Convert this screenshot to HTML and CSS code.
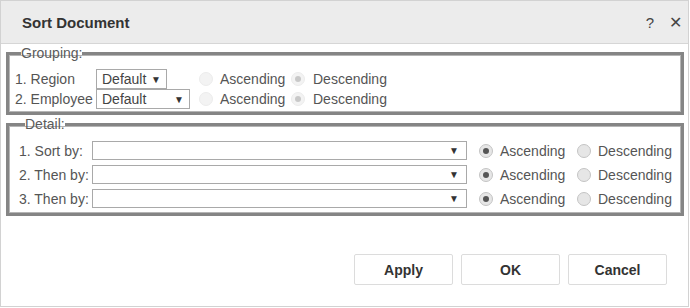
FILE: index.html
```html
<!DOCTYPE html>
<html>
<head>
<meta charset="utf-8">
<link rel="stylesheet" href="styles.css">
</head>
<body>
<div class="dialog">
  <div class="header">
    <div class="title">Sort Document</div>
    <div class="tools"><span class="help">?</span><span class="close">✕</span></div>
  </div>
  <div class="content">
    <fieldset class="group grouping">
      <legend>Grouping:</legend>
      <div class="grow">
        <span class="lbl">1. Region</span>
        <div class="cell"><div class="sel sel-s"><span>Default</span><span class="arr">▼</span></div></div>
        <span class="opt asc"><span class="radio dis"></span><span class="rtxt">Ascending</span></span>
        <span class="opt desc"><span class="radio dis on"></span><span class="rtxt">Descending</span></span>
      </div>
      <div class="grow">
        <span class="lbl">2. Employee</span>
        <div class="cell"><div class="sel sel-m"><span>Default</span><span class="arr">▼</span></div></div>
        <span class="opt asc"><span class="radio dis"></span><span class="rtxt">Ascending</span></span>
        <span class="opt desc"><span class="radio dis on"></span><span class="rtxt">Descending</span></span>
      </div>
    </fieldset>
    <fieldset class="group detail">
      <legend>Detail:</legend>
      <div class="drow">
        <span class="lbl">1. Sort by:</span>
        <div class="sel sel-l"><span></span><span class="arr">▼</span></div>
        <span class="opt asc"><span class="radio on"></span><span class="rtxt">Ascending</span></span>
        <span class="opt desc"><span class="radio"></span><span class="rtxt">Descending</span></span>
      </div>
      <div class="drow">
        <span class="lbl">2. Then by:</span>
        <div class="sel sel-l"><span></span><span class="arr">▼</span></div>
        <span class="opt asc"><span class="radio on"></span><span class="rtxt">Ascending</span></span>
        <span class="opt desc"><span class="radio"></span><span class="rtxt">Descending</span></span>
      </div>
      <div class="drow">
        <span class="lbl">3. Then by:</span>
        <div class="sel sel-l"><span></span><span class="arr">▼</span></div>
        <span class="opt asc"><span class="radio on"></span><span class="rtxt">Ascending</span></span>
        <span class="opt desc"><span class="radio"></span><span class="rtxt">Descending</span></span>
      </div>
    </fieldset>
    <div class="buttons">
      <button class="btn">Apply</button>
      <button class="btn">OK</button>
      <button class="btn">Cancel</button>
    </div>
  </div>
</div>
</body>
</html>
```
FILE: styles.css
```css
* { box-sizing: border-box; }
html, body { margin: 0; padding: 0; background: #fff; }
body { font-family: "Liberation Sans", Arial, sans-serif; color: #555; font-size: 14px; }

.dialog {
  width: 689px;
  height: 307px;
  border: 1px solid #d2d2d2;
  display: flex;
  flex-direction: column;
  background: #fff;
}
.header {
  height: 43px;
  background: #ececec;
  border-bottom: 1px solid #d6d6d6;
  display: flex;
  align-items: center;
  justify-content: space-between;
  padding: 0 6px 0 21px;
  flex: none;
}
.title { font-weight: bold; font-size: 15px; color: #333; }
.tools { display: flex; gap: 15px; align-items: center; color: #444; }
.help { font-size: 15px; }
.close { font-size: 16px; font-weight: 300; }

.content { flex: 1; padding: 1px 4px 0 5px; display: flex; flex-direction: column; }

.group {
  margin: 0;
  border: 3px solid #858585;
  box-shadow: inset 0 0 0 1px #b5b5b5;
  min-width: 0;
}
.group legend {
  padding: 0;
  margin-left: 6px;
  font-size: 14px;
  line-height: 16px;
  color: #5a5a5a;
}
.grouping { padding: 8px 6px 3px 6px; }
.detail { padding: 9px 6px 5px 10px; margin-top: 1px; }

.grow {
  display: grid;
  grid-template-columns: 81px 103px 92px auto;
  align-items: center;
  height: 20px;
}
.drow {
  display: grid;
  grid-template-columns: 73px 375px 110px auto;
  align-items: center;
  height: 19px;
  margin-bottom: 5px;
}
.drow:last-child { margin-bottom: 0; }
.drow .asc { padding-left: 12px; }

.opt { display: flex; align-items: center; gap: 7px; white-space: nowrap; }
.grow .desc { gap: 8px; }

.lbl { color: #555; white-space: nowrap; }
.rtxt { color: #555; white-space: nowrap; }

.sel {
  height: 19px;
  border: 1px solid #a9a9a9;
  background: #fff;
  display: flex;
  align-items: center;
  justify-content: space-between;
  padding: 0 5px 0 5px;
  color: #444;
  font-size: 14px;
}
.grow .sel { height: 20px; }
.sel-s { width: 71px; }
.sel-m { width: 94px; }
.sel-l { width: 375px; }
.arr { font-size: 10px; color: #333; }
.sel-l .arr { margin-right: 2px; }

.radio {
  flex: none;
  width: 14px;
  height: 14px;
  border-radius: 50%;
  border: 1px solid #c4c4c4;
  background: #e6e6e6;
  display: inline-block;
  position: relative;
}
.radio.on::after {
  content: "";
  position: absolute;
  left: 3px; top: 3px;
  width: 6px; height: 6px;
  border-radius: 50%;
  background: #555;
}
.radio.dis { background: #f3f3f3; border-color: #ececec; }
.radio.dis.on::after { background: #c8c8c8; }

.buttons {
  display: flex;
  justify-content: flex-end;
  gap: 8px;
  margin-top: auto;
  padding: 0 17px 21px 0;
}
.btn {
  width: 99px;
  height: 31px;
  border: 1px solid #dcdcdc;
  border-radius: 2px;
  background: #fff;
  font-family: "Liberation Sans", Arial, sans-serif;
  font-weight: bold;
  font-size: 14px;
  color: #333;
  padding: 0;
}
```
